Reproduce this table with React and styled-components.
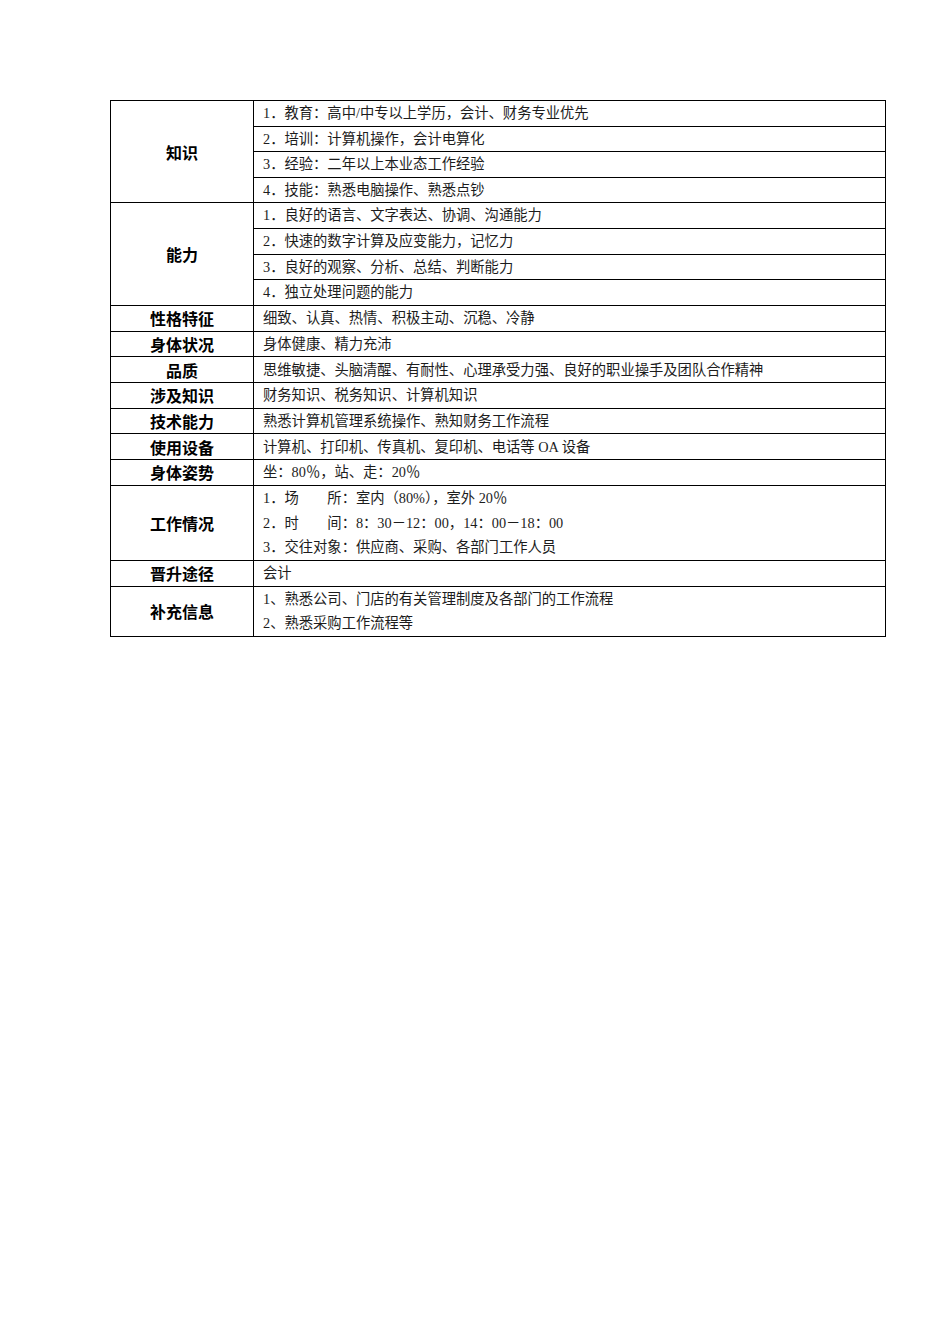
import React from 'react';
import styled, { createGlobalStyle } from 'styled-components';

const GlobalStyle = createGlobalStyle`
  html, body {
    margin: 0;
    padding: 0;
    background: #ffffff;
  }
`;

const SERIF = `"Liberation Serif", "Noto Sans CJK SC", serif`;
const SANS = `"Liberation Sans", "Noto Sans CJK SC", sans-serif`;

// split: right column is split into bordered rows, one per line
// lineHeight: right column is one cell holding several lines
const SECTIONS = [
  {
    label: '知识',
    split: true,
    rowHeight: 25.5,
    items: [
      '1．教育：高中/中专以上学历，会计、财务专业优先',
      '2．培训：计算机操作，会计电算化',
      '3．经验：二年以上本业态工作经验',
      '4．技能：熟悉电脑操作、熟悉点钞',
    ],
  },
  {
    label: '能力',
    split: true,
    rowHeight: 25.75,
    items: [
      '1．良好的语言、文字表达、协调、沟通能力',
      '2．快速的数字计算及应变能力，记忆力',
      '3．良好的观察、分析、总结、判断能力',
      '4．独立处理问题的能力',
    ],
  },
  { label: '性格特征', items: ['细致、认真、热情、积极主动、沉稳、冷静'] },
  { label: '身体状况', items: ['身体健康、精力充沛'] },
  {
    label: '品质',
    items: [
      '思维敏捷、头脑清醒、有耐性、心理承受力强、良好的职业操手及团队合作精神',
    ],
  },
  { label: '涉及知识', items: ['财务知识、税务知识、计算机知识'] },
  { label: '技术能力', items: ['熟悉计算机管理系统操作、熟知财务工作流程'] },
  { label: '使用设备', items: ['计算机、打印机、传真机、复印机、电话等 OA 设备'] },
  { label: '身体姿势', items: ['坐：80％，站、走：20％'] },
  {
    label: '工作情况',
    lineHeight: 25,
    items: [
      '1．场　　所：室内（80%），室外 20％',
      '2．时　　间：8：30－12：00，14：00－18：00',
      '3．交往对象：供应商、采购、各部门工作人员',
    ],
  },
  { label: '晋升途径', rowHeight: 26, items: ['会计'] },
  {
    label: '补充信息',
    lineHeight: 25,
    items: [
      '1、熟悉公司、门店的有关管理制度及各部门的工作流程',
      '2、熟悉采购工作流程等',
    ],
  },
];

const DEFAULT_ROW = 25.7;

const Page = styled.div`
  padding: 100px 0 0 110px;
  min-height: 1344px;
  box-sizing: border-box;
`;

const Table = styled.table`
  width: 776px;
  border-collapse: collapse;
  table-layout: fixed;
`;

const LabelCol = styled.col`
  width: 143px;
`;

const LabelCell = styled.td`
  border: 1px solid #000;
  padding: 0;
  text-align: center;
  vertical-align: middle;
  font-family: ${SANS};
  font-weight: 700;
  font-size: 16px;
  color: #000;
`;

const TextCell = styled.td`
  border: 1px solid #000;
  padding: 0 0 0 9px;
  height: ${(p) => p.$height - 1}px;
  vertical-align: middle;
  font-family: ${SERIF};
  font-size: 14.3px;
  color: #1c1c1c;
  white-space: nowrap;
  line-height: 1;
`;

const Line = styled.div`
  height: ${(p) => p.$height}px;
  line-height: ${(p) => p.$height}px;
`;

const Section = ({ section }) => {
  const rowHeight = section.rowHeight || DEFAULT_ROW;

  if (section.split) {
    return section.items.map((item, i) => (
      <tr key={item}>
        {i === 0 && (
          <LabelCell rowSpan={section.items.length}>{section.label}</LabelCell>
        )}
        <TextCell $height={rowHeight}>{item}</TextCell>
      </tr>
    ));
  }

  if (section.lineHeight) {
    const total = section.lineHeight * section.items.length;
    return (
      <tr>
        <LabelCell>{section.label}</LabelCell>
        <TextCell $height={total}>
          {section.items.map((item) => (
            <Line key={item} $height={section.lineHeight - 0.5}>
              {item}
            </Line>
          ))}
        </TextCell>
      </tr>
    );
  }

  return (
    <tr>
      <LabelCell>{section.label}</LabelCell>
      <TextCell $height={rowHeight}>{section.items[0]}</TextCell>
    </tr>
  );
};

const App = () => {
  return (
    <Page>
      <GlobalStyle />
      <Table>
        <colgroup>
          <LabelCol />
          <col />
        </colgroup>
        <tbody>
          {SECTIONS.map((section) => (
            <Section key={section.label} section={section} />
          ))}
        </tbody>
      </Table>
    </Page>
  );
};

export default App;
